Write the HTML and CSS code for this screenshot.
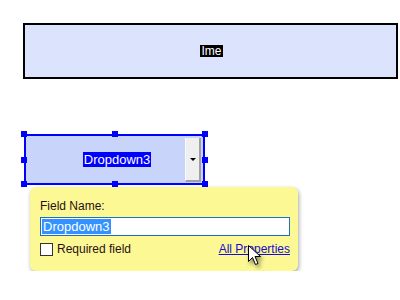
FILE: index.html
```html
<!DOCTYPE html>
<html lang="en">
<head>
    <meta charset="UTF-8">
    <title>Form Designer</title>
    <link rel="stylesheet" href="styles.css">
</head>
<body>
    <!-- text field -->
    <div class="field-box">
        <span class="sel-black">Ime</span>
    </div>

    <!-- selected dropdown -->
    <div class="dropdown">
        <div class="dropdown-text"><span class="sel-blue">Dropdown3</span></div>
        <div class="dropdown-btn"><span class="arrow"></span></div>
        <span class="handle h-tl"></span>
        <span class="handle h-tm"></span>
        <span class="handle h-tr"></span>
        <span class="handle h-ml"></span>
        <span class="handle h-mr"></span>
        <span class="handle h-bl"></span>
        <span class="handle h-bm"></span>
        <span class="handle h-br"></span>
    </div>

    <!-- quick properties popup -->
    <div class="popup">
        <div class="popup-label">Field Name:</div>
        <div class="popup-input"><span class="sel-input">Dropdown3</span></div>
        <div class="popup-row">
            <label class="check"><span class="box"></span>Required field</label>
            <a class="link" href="#">All Properties</a>
        </div>
        <svg class="cursor" width="20" height="26" viewBox="0 0 20 26">
            <path d="M1.5 1.5 L1.5 17.5 L5.5 13.5 L8.5 20.5 L11 19.5 L8 12.5 L13.5 12.5 Z" fill="#fff" stroke="#000" stroke-width="1" stroke-linejoin="miter"/>
        </svg>
    </div>
</body>
</html>
```
FILE: styles.css
```css
body {
    margin: 0;
    background: #fff;
    font-family: "Liberation Sans", Arial, sans-serif;
    font-size: 12px;
    color: #222;
}

.field-box {
    box-sizing: border-box;
    width: 375px;
    height: 56px;
    margin: 23px 0 0 23px;
    border: 2px solid #000;
    background: #dce3fd;
    display: flex;
    align-items: center;
    justify-content: center;
    padding-left: 2px;
}
.sel-black {
    background: #000;
    color: #fff;
    font-size: 12px;
    line-height: 12px;
    padding: 0 1px;
}

.dropdown {
    position: relative;
    box-sizing: border-box;
    width: 181px;
    height: 51px;
    margin: 55px 0 0 24px;
    border: 2px solid #0000ff;
    background: #c9d4fb;
    display: flex;
    align-items: stretch;
}
.dropdown-text {
    flex: 1;
    display: flex;
    align-items: center;
    justify-content: center;
    padding-left: 23px;
}
.sel-blue {
    background: #0000ff;
    color: #fff;
    font-size: 13px;
    line-height: 15px;
    padding: 0 1px;
}
.dropdown-btn {
    box-sizing: border-box;
    width: 16px;
    margin: 2px 2px 1px 0;
    background: #efefef;
    border-right: 2px solid #a0a0a0;
    border-bottom: 2px solid #a0a0a0;
    border-left: 1px solid #fafafa;
    display: flex;
    align-items: center;
    justify-content: center;
}
.arrow {
    width: 0;
    height: 0;
    border-left: 3px solid transparent;
    border-right: 3px solid transparent;
    border-top: 3px solid #000;
    margin-top: 1px;
}
.handle {
    position: absolute;
    width: 6px;
    height: 6px;
    background: #0000ff;
}
.h-tl { left: -5px; top: -5px; }
.h-tm { left: 86px; top: -5px; }
.h-tr { right: -5px; top: -5px; }
.h-ml { left: -5px; top: 21px; }
.h-mr { right: -5px; top: 21px; }
.h-bl { left: -5px; bottom: -4px; }
.h-bm { left: 86px; bottom: -4px; }
.h-br { right: -5px; bottom: -4px; }

.popup {
    position: relative;
    box-sizing: border-box;
    width: 268px;
    height: 84px;
    margin: 2px 0 0 30px;
    padding: 12px 8px 0 10px;
    background: #fcf995;
    border-radius: 6px;
    box-shadow: 1px 2px 4px rgba(0, 0, 0, 0.35);
}
.popup-label {
    line-height: 14px;
    color: #2a1010;
}
.popup-input {
    box-sizing: border-box;
    height: 19px;
    margin-top: 4px;
    border: 1px solid #1c6fc4;
    background: #fff;
    padding: 1px 1px;
    display: flex;
    align-items: center;
}
.sel-input {
    background: #3392ff;
    color: #fff;
    font-size: 13px;
    line-height: 15px;
    padding: 0 1px;
}
.popup-row {
    display: flex;
    justify-content: space-between;
    align-items: center;
    margin-top: 7px;
    line-height: 13px;
}
.check {
    display: flex;
    align-items: center;
    color: #2a1010;
}
.box {
    box-sizing: border-box;
    width: 13px;
    height: 13px;
    border: 1px solid #333;
    background: #fff;
    margin-right: 4px;
}
.link {
    color: #1a0dcc;
    text-decoration: underline;
}
.cursor {
    position: absolute;
    left: 217px;
    top: 57px;
    filter: drop-shadow(2px 3px 2px rgba(0, 0, 0, 0.45));
}
```
